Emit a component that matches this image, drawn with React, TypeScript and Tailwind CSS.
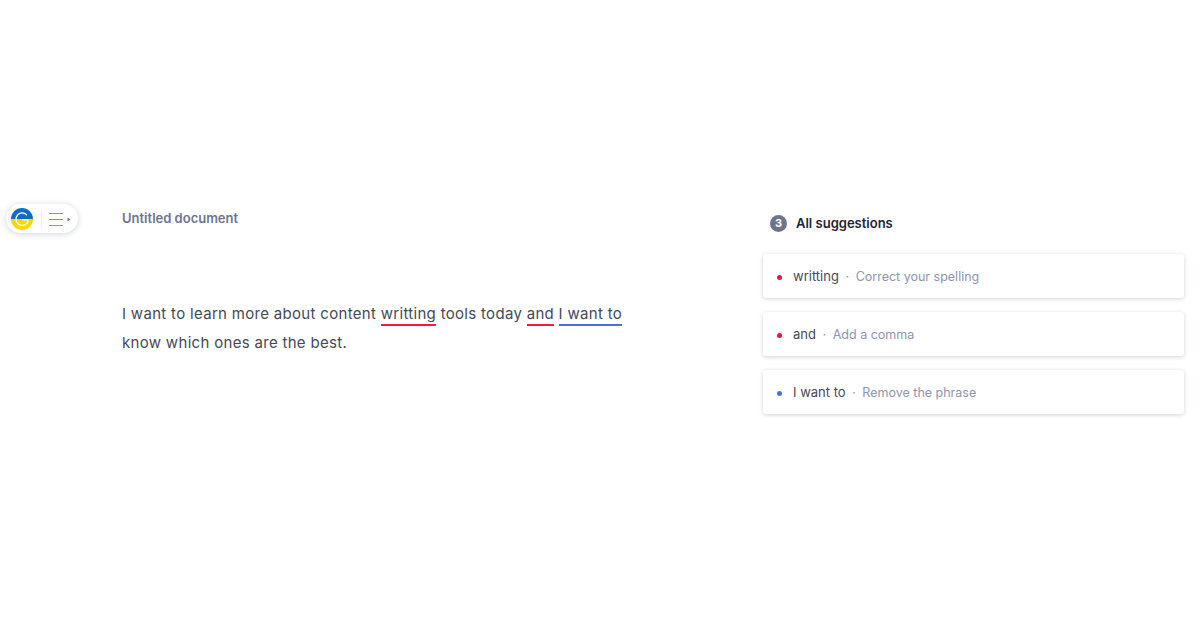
import React from 'react';

const suggestions = [
    { word: "writting", hint: "Correct your spelling", dot: "bg-[#e5173f]" },
    { word: "and", hint: "Add a comma", dot: "bg-[#e5173f]" },
    { word: "I want to", hint: "Remove the phrase", dot: "bg-[#4a6ee0]" },
];

const FloatingButton = () => (
    <div className="flex h-[29px] w-[72px] items-center rounded-full bg-white pl-[5px] shadow-[0_1px_6px_rgba(30,40,70,0.2)]">
        <svg width="22" height="22" viewBox="0 0 22 22">
            <path d="M0 11a11 11 0 0 1 22 0z" fill="#0a6fc2" />
            <path d="M0 11a11 11 0 0 0 22 0z" fill="#ffd500" />
            <path d="M15.6 6.8A6.2 6.2 0 1 0 16.2 14.8" fill="none" stroke="#fff" strokeWidth="1.3" strokeLinecap="round" />
            <path d="M11.8 11.8h5v3.4" fill="none" stroke="#fff" strokeWidth="1.3" strokeLinecap="round" strokeLinejoin="round" />
        </svg>
        <div className="ml-[8px] h-[18px] w-px bg-[#f0f1f5]" />
        <svg className="ml-[7px]" width="24" height="14" viewBox="0 0 24 14">
            <path d="M0 1.5h14M0 7.5h14M0 13.5h14" stroke="#8f94b0" strokeWidth="1" fill="none" />
            <path d="M18.5 5.5l3 2-3 2z" fill="#6d758d" />
        </svg>
    </div>
);

const App = () => {
    return (
        <div className="flex h-[630px] w-[1200px] bg-white font-['Inter',sans-serif]">
            {/* left rail */}
            <div className="w-[122px] pl-[6px] pt-[204px]">
                <FloatingButton />
            </div>

            {/* document */}
            <div className="w-[641px] pt-[209px]">
                <h1 className="text-[13px] leading-[18px] font-semibold text-[#6d758d]">Untitled document</h1>
                <p className="mt-[72px] w-[520px] text-[15px] leading-[29px] tracking-[0.31px] text-[#444a58]">
                    I want to learn more about content{" "}
                    <span className="border-b-2 border-[#f0193f] pb-px">writting</span> tools today{" "}
                    <span className="border-b-2 border-[#f0193f] pb-px">and</span>{" "}
                    <span className="border-b-2 border-[#4a6ee0] pb-px">I want to</span> know which ones are the best.
                </p>
            </div>

            {/* suggestions */}
            <div className="w-[421px] pt-[214px]">
                <div className="flex items-center pl-[7px]">
                    <div className="flex h-[17px] w-[17px] items-center justify-center rounded-full bg-[#6d758d] text-[11px] font-bold text-white">3</div>
                    <span className="ml-[9px] text-[13px] leading-[18px] font-semibold text-[#1f2433]">All suggestions</span>
                </div>
                <div className="mt-[22px] flex flex-col gap-[14px]">
                    {suggestions.map((item, index) => (
                        <div key={index} className="flex h-[44px] items-center rounded-[3px] bg-white pl-[14px] pt-[2px] text-[13px] shadow-[0_1px_4px_rgba(30,40,70,0.2)]">
                            <span className={`h-[5px] w-[5px] rounded-full ${item.dot}`} />
                            <span className="ml-[11px] text-[#444a58]">{item.word}</span>
                            <span className="mx-[6.5px] text-[#8f94b0]">·</span>
                            <span className="text-[12.5px] text-[#8f94b0]">{item.hint}</span>
                        </div>
                    ))}
                </div>
            </div>
        </div>
    );
};

export default App;
